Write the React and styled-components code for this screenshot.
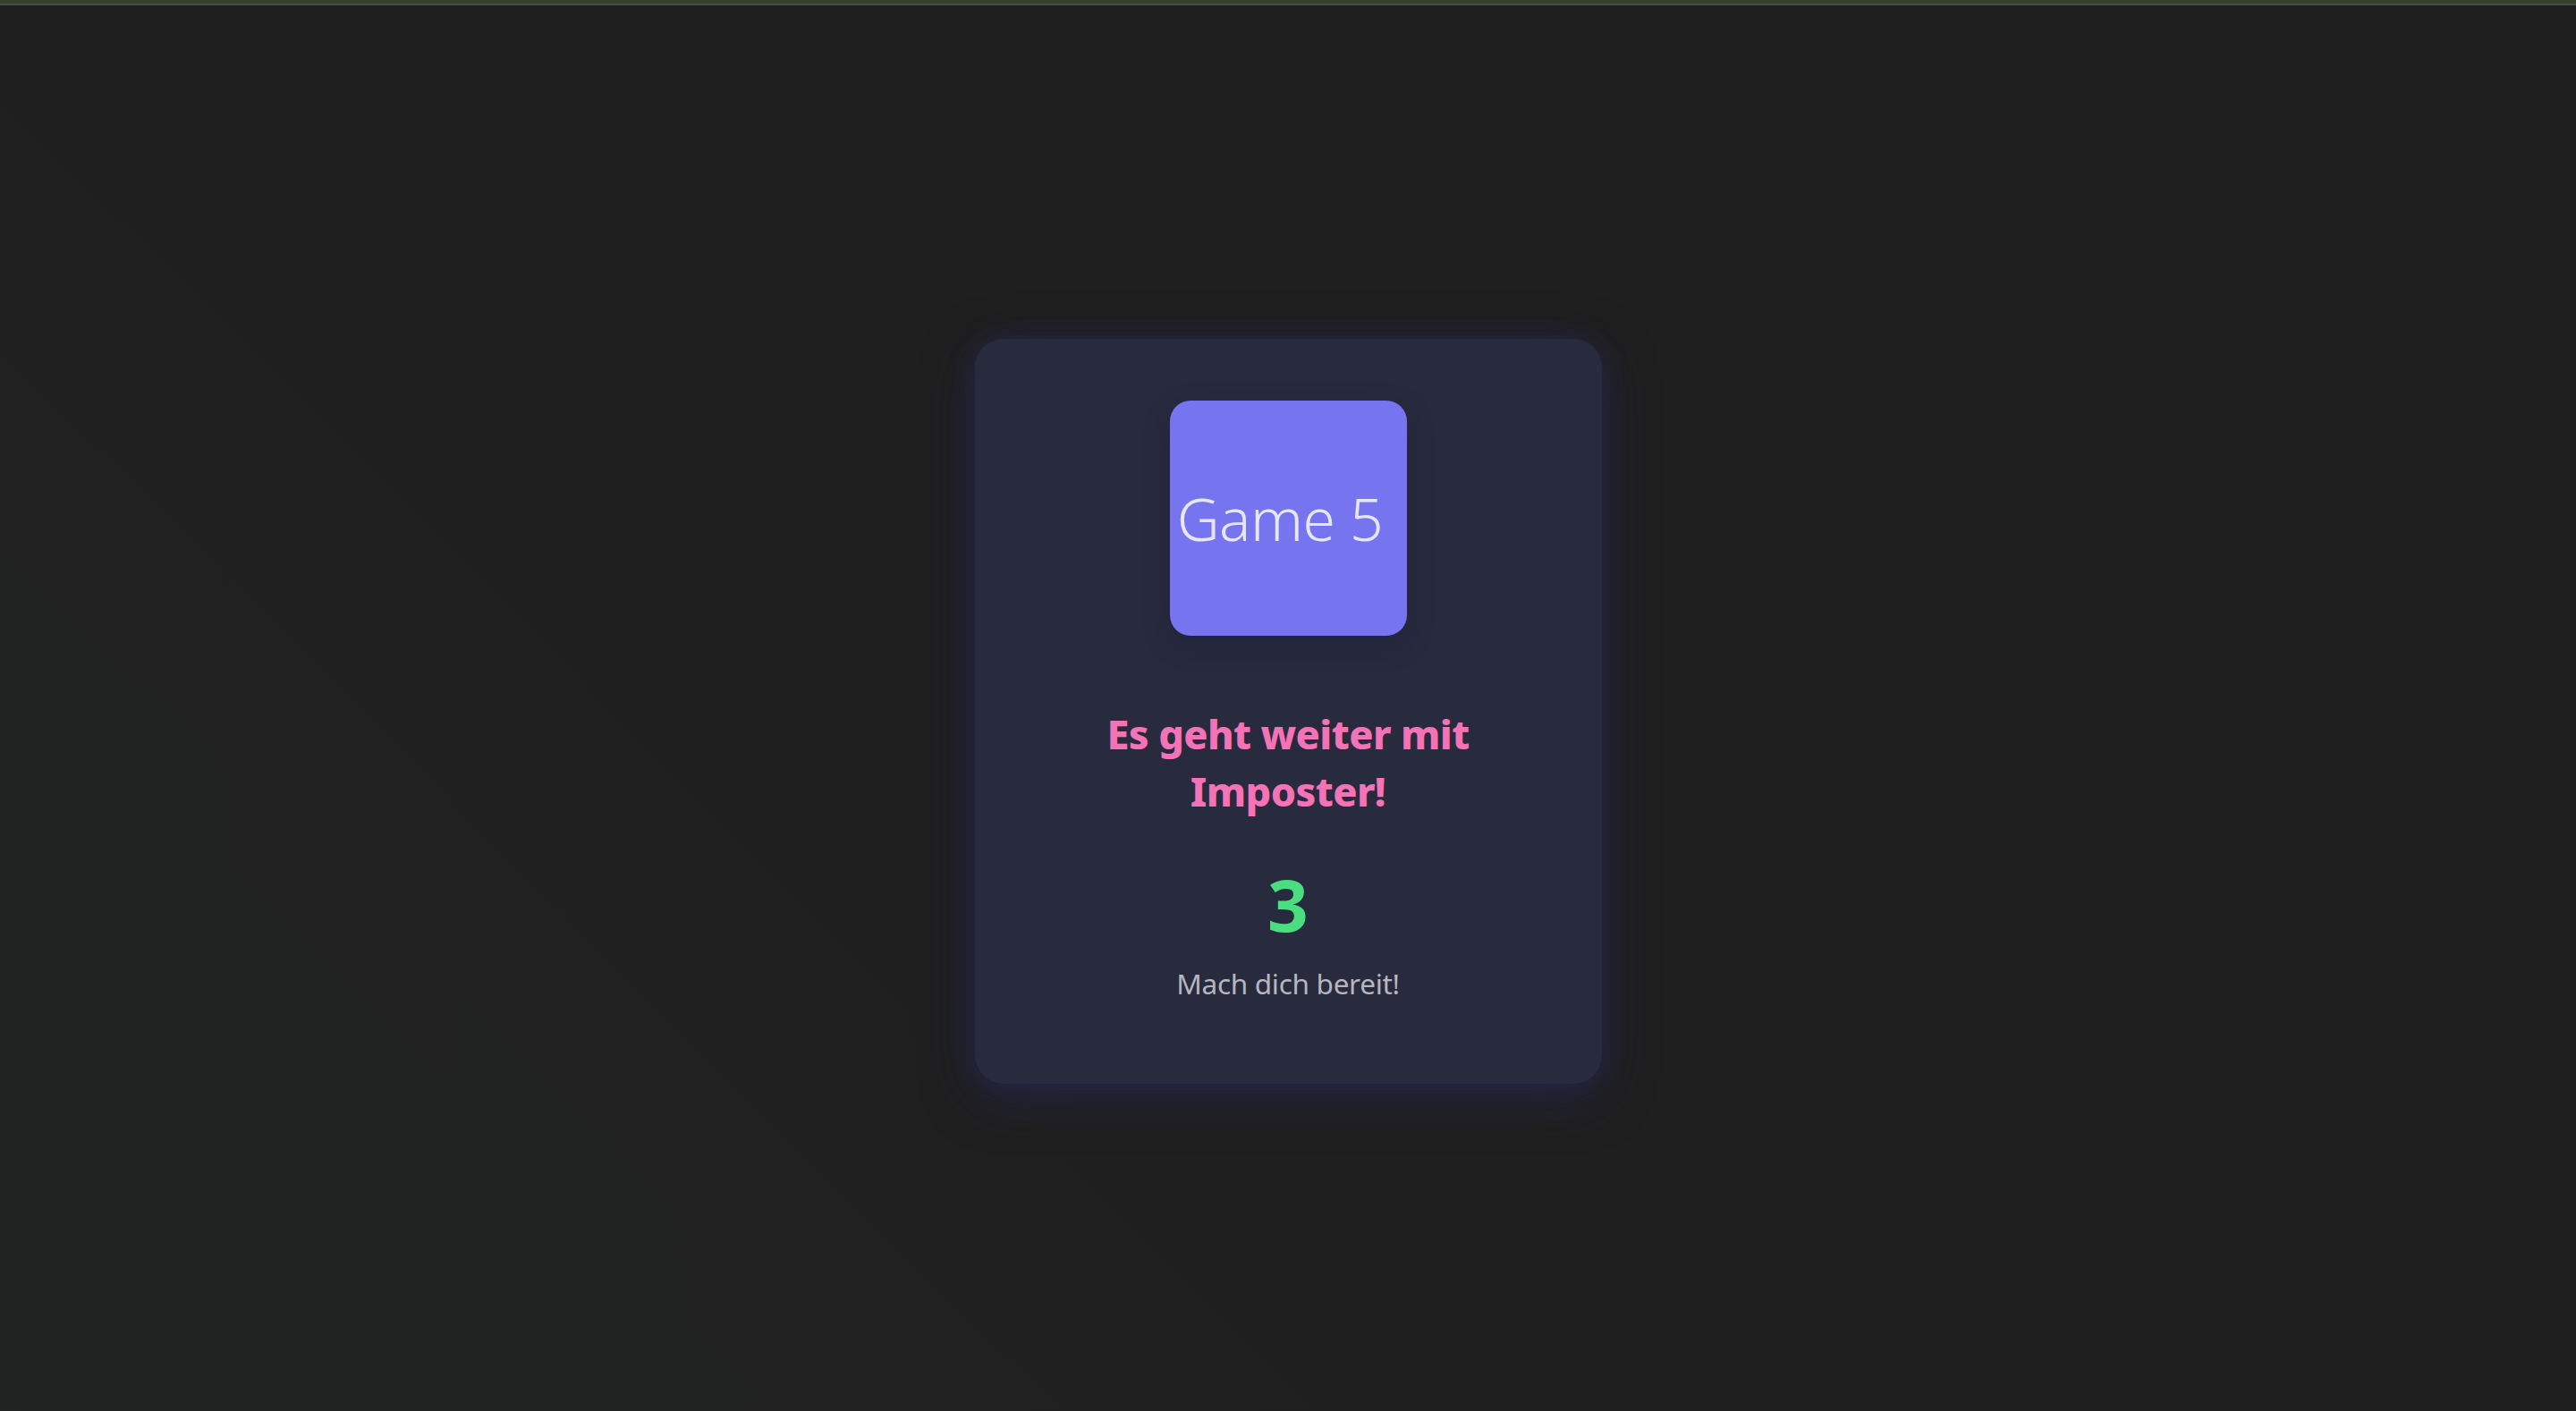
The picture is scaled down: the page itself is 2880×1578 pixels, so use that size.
import styled, { createGlobalStyle } from 'styled-components';

const GlobalStyle = createGlobalStyle`
  html, body {
    margin: 0;
    padding: 0;
    background: #1f1f1f;
  }
  body {
    font-family: 'Noto Sans', 'Open Sans', sans-serif;
  }
`;

const Page = styled.div`
  min-height: 100vh;
  display: flex;
  flex-direction: column;
  background:
    linear-gradient(45deg, rgba(34, 40, 36, 0.55) 0%, rgba(31, 31, 31, 0) 35%),
    #1f1f1f;
`;

const TopBar = styled.div`
  height: 4px;
  background: #37402a;
  border-bottom: 2px solid #4b4c43;
`;

const Stage = styled.main`
  flex: 1;
  display: flex;
  align-items: center;
  justify-content: center;
  padding-top: 6px;
`;

const Card = styled.section`
  width: 701px;
  height: 833px;
  box-sizing: border-box;
  padding: 69px 0 0;
  display: flex;
  flex-direction: column;
  align-items: center;
  background: #282a3e;
  border-radius: 32px;
  box-shadow:
    0 14px 56px rgba(40, 40, 100, 0.5),
    0 0 28px rgba(44, 44, 90, 0.4);
`;

const GameTile = styled.div`
  width: 265px;
  height: 263px;
  border-radius: 23px;
  background: #7675ef;
  display: flex;
  align-items: center;
  justify-content: center;
  box-shadow: 0 10px 30px rgba(20, 20, 50, 0.3);
`;

const TileLabel = styled.span`
  font-family: 'Noto Sans', 'Open Sans', sans-serif;
  font-weight: 300;
  font-size: 66px;
  color: #e6e6ff;
  margin-right: 18px;
  letter-spacing: -0.5px;
`;

const Heading = styled.h1`
  margin: 78px 0 0;
  text-align: center;
  font-family: 'Noto Sans', 'Open Sans', sans-serif;
  font-weight: 800;
  font-size: 45px;
  line-height: 64px;
  color: #f472b6;
  letter-spacing: -0.6px;
`;

const Countdown = styled.div`
  margin-top: 44px;
  font-family: 'Noto Sans', 'Open Sans', sans-serif;
  font-weight: 700;
  font-size: 80px;
  line-height: 100px;
  color: #4ade80;
`;

const Hint = styled.p`
  margin: 19px 0 0;
  font-family: 'Noto Sans', 'Open Sans', sans-serif;
  font-size: 31.5px;
  line-height: 40px;
  color: #b6b6bf;
  letter-spacing: -0.3px;
`;

export default function App() {
  return (
    <>
      <GlobalStyle />
      <Page>
        <TopBar />
        <Stage>
          <Card>
            <GameTile>
              <TileLabel>Game 5</TileLabel>
            </GameTile>
            <Heading>
              Es geht weiter mit
              <br />
              Imposter!
            </Heading>
            <Countdown>3</Countdown>
            <Hint>Mach dich bereit!</Hint>
          </Card>
        </Stage>
      </Page>
    </>
  );
}
